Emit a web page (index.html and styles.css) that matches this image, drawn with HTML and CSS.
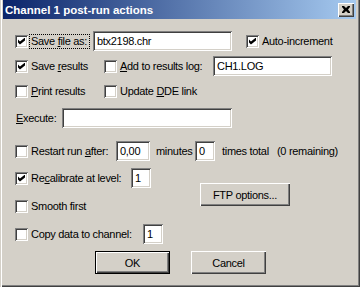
FILE: index.html
```html
<!DOCTYPE html>
<html lang="en">
<head>
  <meta charset="UTF-8">
  <title>Channel 1 post-run actions</title>
  <link rel="stylesheet" href="styles.css">
</head>
<body>
  <div class="window">
    <div class="titlebar">
      <span class="title">Channel 1 post-run actions</span>
      <span class="close">
        <svg width="8" height="7" viewBox="0 0 8 7"><path d="M0 0h2l2 2 2-2h2v1l-2 2.5 2 2.5v1h-2l-2-2-2 2h-2v-1l2-2.5-2-2.5z" fill="#000"/></svg>
      </span>
    </div>
    <div class="content">
      <div class="row r1">
        <label class="check w78"><span class="box on"></span><span class="focus">Save <u>f</u>ile as:</span></label>
        <span class="edit w139">btx2198.chr</span>
        <label class="check ml14"><span class="box on"></span><span>Auto-increment</span></label>
      </div>
      <div class="row r2">
        <label class="check w89"><span class="box on"></span><span>Save <u>r</u>esults</span></label>
        <label class="check w109"><span class="box"></span><span><u>A</u>dd to results log:</span></label>
        <span class="edit w119">CH1.LOG</span>
      </div>
      <div class="row r3">
        <label class="check w89"><span class="box"></span><span><u>P</u>rint results</span></label>
        <label class="check"><span class="box"></span><span>Update <u>D</u>DE link</span></label>
      </div>
      <div class="row r4">
        <span class="lbl w46"><u>E</u>xecute:</span>
        <span class="edit w170"></span>
      </div>
      <div class="row r5">
        <label class="check w101"><span class="box"></span><span>Restart run <u>a</u>fter:</span></label>
        <span class="edit w34">0,00</span>
        <span class="lbl ml6 w39">minutes</span>
        <span class="edit w20">0</span>
        <span class="lbl ml7 w55">times total</span>
        <span class="lbl">(0 remaining)</span>
      </div>
      <div class="group">
        <div class="col">
          <div class="row r6">
            <label class="check w116"><span class="box on"></span><span>Re<u>c</u>alibrate at level:</span></label>
            <span class="edit w20">1</span>
          </div>
          <div class="row r7">
            <label class="check"><span class="box"></span><span>Smooth first</span></label>
          </div>
        </div>
        <span class="btn ftp">FTP options...</span>
      </div>
      <div class="row r8">
        <label class="check w128"><span class="box"></span><span>Copy data to channel:</span></label>
        <span class="edit w20">1</span>
      </div>
      <div class="buttons">
        <span class="btn default">OK</span>
        <span class="btn">Cancel</span>
      </div>
    </div>
  </div>
</body>
</html>
```

FILE: styles.css
```css
/* classic windows dialog */
body { margin: 0; background: #d4d0c8; font-family: "Liberation Sans", Arial, sans-serif; font-size: 11px; letter-spacing: -0.3px; color: #000; }
.window { width: 360px; height: 287px; box-sizing: border-box; background: #d4d0c8; box-shadow: inset 1px 0 #d4d0c8, inset 2px 0 #fff, inset -1px -1px #404040, inset -2px -2px #808080; overflow: hidden; }

.titlebar { height: 19px; margin: 0 4px 0 3px; display: flex; align-items: center; justify-content: space-between; background: linear-gradient(to right, #0a246a, #a6caf0); }
.title { color: #fff; font-weight: bold; font-size: 11.5px; letter-spacing: 0; margin-left: 2px; }
.close { width: 16px; height: 14px; margin-right: 2px; box-sizing: border-box; background: #d4d0c8; display: flex; align-items: center; justify-content: center; box-shadow: inset 1px 1px #fff, inset -1px -1px #404040, inset -2px -2px #808080; }

.content { padding-top: 12px; }
.row { display: flex; align-items: center; height: 20px; }
.r1 { margin-bottom: 5px; }
.r2 { margin-bottom: 5px; }
.r3 { margin-bottom: 7px; }
.r4 { margin-bottom: 13px; }
.r5 { margin-bottom: 7px; }
.r6 { margin-bottom: 8px; }
.r8 { margin-top: 8px; margin-bottom: 7px; }

.check { display: flex; align-items: center; white-space: nowrap; }
.row > .check:first-child { margin-left: 15px; }
.box { width: 13px; height: 13px; box-sizing: border-box; margin-right: 3px; background: #fff; flex: none; box-shadow: inset 1px 1px #808080, inset -1px -1px #fff, inset 2px 2px #404040, inset -2px -2px #d4d0c8; position: relative; }
.box.on::after { content: ""; position: absolute; left: 3px; top: 3px; width: 7px; height: 7px; background: #000; clip-path: polygon(0 28%, 28% 57%, 100% 0, 100% 43%, 28% 100%, 0 71%); }
.focus { outline: 1px dotted #000; outline-offset: 0; padding: 0 2px 0 1px; line-height: 13px; }
.r1 .check:first-child .box { margin-right: 2px; }

.lbl { white-space: nowrap; flex: none; }
.r4 .lbl { margin-left: 16px; }
.edit { height: 20px; box-sizing: border-box; background: #fff; padding: 3px 2px 0 4px; line-height: 14px; flex: none; box-shadow: inset 1px 1px #808080, inset -1px -1px #fff, inset 2px 2px #404040, inset -2px -2px #d4d0c8; }

.w20 { width: 20px; }
.w34 { width: 34px; }
.w39 { width: 39px; }
.w46 { width: 46px; }
.w55 { width: 55px; }
.w78 { width: 78px; flex: none; }
.w89 { width: 89px; flex: none; }
.w101 { width: 101px; flex: none; }
.w109 { width: 109px; flex: none; }
.w116 { width: 116px; flex: none; }
.w119 { width: 119px; }
.w128 { width: 128px; flex: none; }
.w139 { width: 139px; }
.w170 { width: 170px; }
.ml6 { margin-left: 6px; }
.ml7 { margin-left: 7px; }
.ml14 { margin-left: 14px; }

.group { display: flex; }
.ftp { margin: 15px 0 0 49px; width: 90px; }

.btn { height: 23px; box-sizing: border-box; display: flex; align-items: center; justify-content: center; background: #d4d0c8; flex: none; box-shadow: inset 1px 1px #fff, inset -1px -1px #404040, inset -2px -2px #808080; }
.buttons { display: flex; margin-left: 95px; gap: 21px; }
.buttons .btn { width: 75px; }
.btn.default { box-shadow: inset 0 0 0 1px #000, inset 2px 2px #fff, inset -2px -2px #404040, inset -3px -3px #808080; }
```
